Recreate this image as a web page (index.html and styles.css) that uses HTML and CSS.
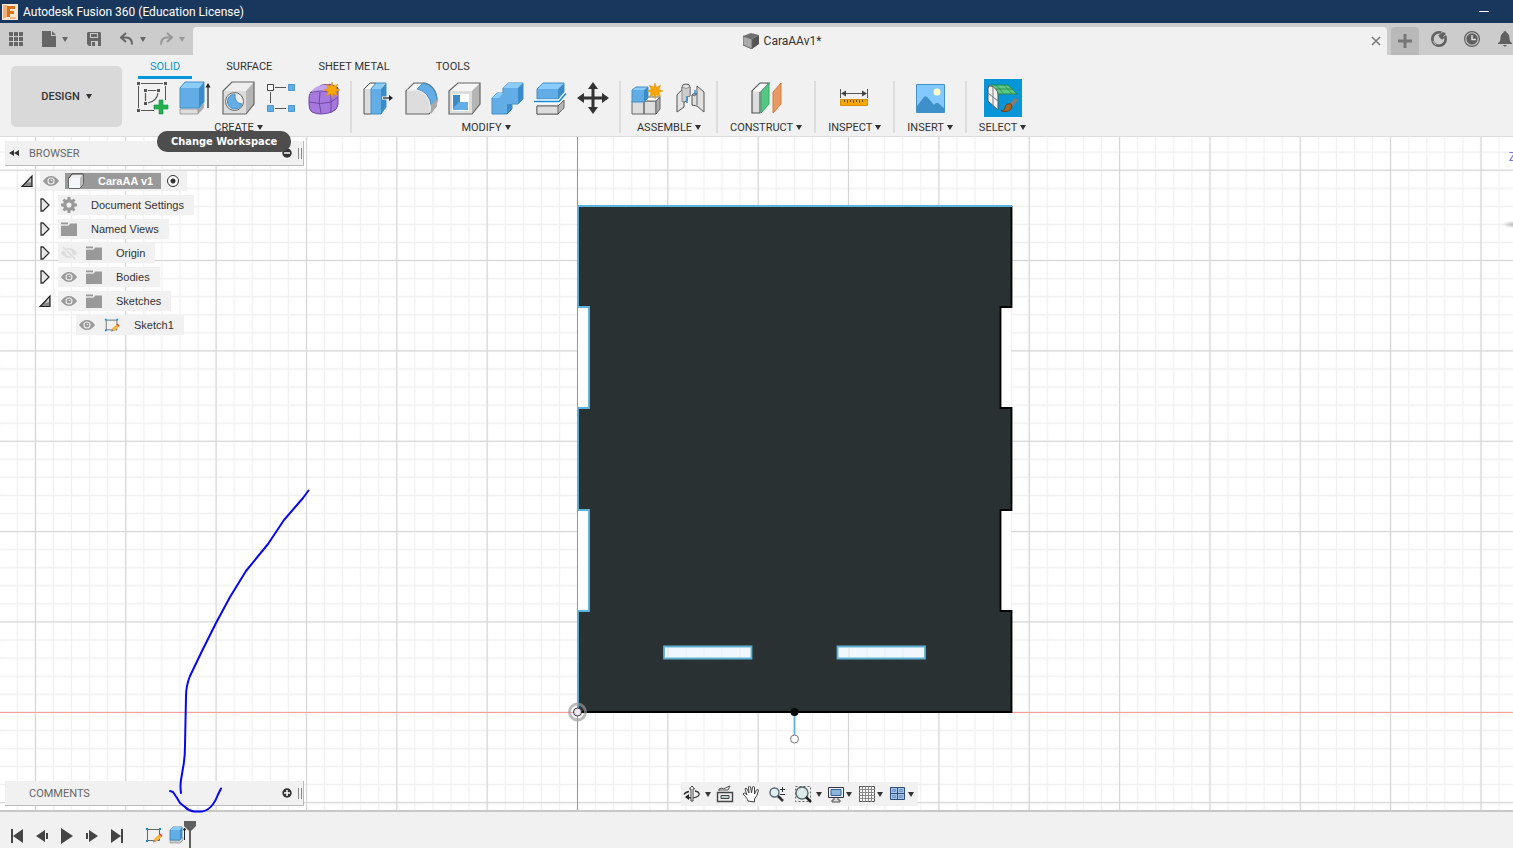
FILE: index.html
```
<!DOCTYPE html>
<html lang="en">
<head>
    <meta charset="UTF-8">
    <meta name="viewport" content="width=device-width, initial-scale=1.0">
    <title>Autodesk Fusion 360 (Education License)</title>
    <link rel="stylesheet" href="styles.css">
</head>
<body>
    <!-- Shared icons -->
    <svg class="sprite" aria-hidden="true">
        <defs>
            <symbol id="eye" viewBox="0 0 16 12">
                <path d="M0 6Q3.500 1 8 1T16 6Q12.500 11 8 11T0 6z" fill="#999"/>
                <circle cx="8" cy="6" r="3.600" fill="#eee"/>
                <circle cx="8" cy="6" r="2.400" fill="#999"/>
                <circle cx="8.500" cy="5.500" r=".8" fill="#eee"/>
            </symbol>
            <symbol id="eye-off" viewBox="0 0 16 12">
                <path d="M0 6Q3.500 1 8 1T16 6Q12.500 11 8 11T0 6z" fill="#ddd"/>
                <circle cx="8" cy="6" r="3.200" fill="#f1f1f1"/>
                <circle cx="8" cy="6" r="2" fill="#ddd"/>
                <path d="M1 0l14 12" stroke="#f1f1f1" stroke-width="3"/>
                <path d="M2 0l12 12" stroke="#ddd" stroke-width="1.500"/>
            </symbol>
            <symbol id="folder" viewBox="0 0 16 14">
                <path d="M0 2.500V.5h7v2zM0 3.500h7.500l1.500-2h7V14H0z" fill="#999"/>
                <path d="M0 3h7.500l1.500-2" stroke="#eee" fill="none" stroke-width=".8"/>
            </symbol>
            <symbol id="closed" viewBox="0 0 12 14">
                <path d="M2 1h2l6 6-6 6H2z" fill="#e8e8e8" stroke="#333" stroke-width="1.300"/>
            </symbol>
            <symbol id="open" viewBox="0 0 12 14">
                <path d="M11 2v10.500H1z" fill="#888" stroke="#222" stroke-width="1.200"/>
                <path d="M10 4v4L6 9z" fill="#ccc"/>
            </symbol>
            <symbol id="sketch" viewBox="0 0 18 16">
                <path d="M2.500 2.500h12v11h-12z" fill="none" stroke="#666"/>
                <path d="M1 1h2v2H1zM14 1h2v2h-2zM1 13h2v2H1z" fill="#0d8ee0"/>
                <path d="M8 15l1.500-3.500 4.500-4 2.500 2.500-5 4.500z" fill="#f7b53c"/>
                <path d="M14 7.500l1.500-1 2 2-1 1.500z" fill="#f0443c"/>
                <path d="M8 15.500l1-3 2 2z" fill="#888"/>
            </symbol>
            <symbol id="star" viewBox="0 0 16 16">
                <path d="M8 0l1.300 4.300L13.600 2.300 11.800 6.500 16 8l-4.200 1.500 1.800 4.200-4.300-2L8 16l-1.300-4.300-4.300 2 1.800-4.200L0 8l4.200-1.500-1.800-4.200 4.300 2z" fill="#f9a500" stroke="#df8e00" stroke-width=".5"/>
            </symbol>
        </defs>
    </svg>

    <header class="title-bar">
        <svg class="app-logo" viewBox="0 0 16 16"><path fill="#fbe6d2" d="M0 0h16v16H0z"/><path fill="#f0b27a" d="M1 1h4v12l-4 2z"/><path fill="#d9731c" d="M5 2h8v3H8v2h4v3H8v3H5z"/><path fill="#f3b98a" d="M8 13h6v2H8z"/></svg>
        <h1>Autodesk Fusion 360 (Education License)</h1>
        <button class="minimize" aria-label="Minimize"></button>
    </header>

    <div class="tab-bar">
        <div class="quick-access">
            <button class="quick" aria-label="Data panel"><svg width="14" height="14"><path fill="#666" d="M0 0h4v4H0zM5 0h4v4H5zM10 0h4v4h-4zM0 5h4v4H0zM5 5h4v4H5zM10 5h4v4h-4zM0 10h4v4H0zM5 10h4v4H5zM10 10h4v4h-4z"/></svg></button>
            <button class="quick wide" aria-label="File"><svg width="14" height="16"><path fill="#666" d="M0 0h9v5h5v11H0z"/><path fill="#666" d="M10 0l4 4h-4z"/></svg><i class="caret"></i></button>
            <button class="quick" aria-label="Save"><svg width="14" height="14"><path fill="#666" d="M1 0h12l1 1v13H2l-2-2V1z"/><path fill="#ccc" d="M3 1h8v5H3zM4 9h7v5H4z"/><path fill="#666" d="M4 2h6v3H4zM5 10h3v4H5z"/></svg></button>
            <button class="quick wide" aria-label="Undo"><svg width="14" height="14"><path d="M6 1L1 5.500 6 10M1 5.500h5q6 0 6 7" fill="none" stroke="#666" stroke-width="2"/></svg><i class="caret"></i></button>
            <button class="quick wide faded" aria-label="Redo"><svg width="14" height="14"><path d="M8 1l5 4.500L8 10M13 5.500H8q-6 0-6 7" fill="none" stroke="#666" stroke-width="2"/></svg><i class="caret"></i></button>
        </div>
        <div class="document-tab">
            <div class="document-name">
                <svg width="16" height="16"><path d="M0 3l8-3 8 2-7 4z" fill="#707070"/><path d="M0 3l9 3v10l-9-4z" fill="#aaa"/><path d="M9 6l7-4v9l-7 5z" fill="#555"/><path d="M0 3l9 3v10l-9-4z" fill="none" stroke="#666"/></svg>
                <span>CaraAAv1*</span>
            </div>
            <button class="close-tab" aria-label="Close"><svg width="10" height="10"><path d="M1 1l8 8M9 1L1 9" stroke="#777" stroke-width="1.500"/></svg></button>
        </div>
        <button class="new-tab" aria-label="New design"><svg width="14" height="14"><path d="M5.500 0h3v5.500H14v3H8.500V14h-3V8.500H0v-3h5.500z" fill="#777"/></svg></button>
        <div class="status-buttons">
            <button class="status" aria-label="Extensions"><svg width="16" height="16"><circle cx="8" cy="8" r="6.700" fill="none" stroke="#606060" stroke-width="2.600"/><path d="M14 2L9 7M8 4l4 4M9 3l4 4" stroke="#606060" stroke-width="2"/><path d="M10 2.500l2-2.500M12.500 5.500L15 3.500M2 10l3 4" stroke="#ccc" stroke-width="1"/></svg></button>
            <button class="status" aria-label="Job status"><svg width="16" height="16"><circle cx="8" cy="8" r="7.400" fill="none" stroke="#606060" stroke-width="1.200"/><circle cx="8" cy="8" r="5.700" fill="#606060"/><path d="M8 4v4.500h4" fill="none" stroke="#ddd" stroke-width="1.500"/></svg></button>
            <button class="status bell" aria-label="Notifications"><svg width="16" height="16"><path d="M6.500 1.500q0-1.500 1.500-1.500t1.500 1.500Q12.500 3 12.500 7q0 4 2.500 5v1H1v-1q2.500-1 2.500-5 0-4 3-5.500zM6 14h4q-2 3-4 0z" fill="#606060"/></svg></button>
        </div>
    </div>

    <div class="toolbar">
        <button class="workspace">DESIGN <i class="caret"></i></button>
        <div class="ribbon">
            <nav class="ribbon-tabs">
                <a class="ribbon-tab active" href="#">SOLID</a>
                <a class="ribbon-tab" href="#">SURFACE</a>
                <a class="ribbon-tab" href="#">SHEET METAL</a>
                <a class="ribbon-tab" href="#">TOOLS</a>
            </nav>
            <div class="ribbon-groups">
                <section class="group">
                    <div class="tools">
                        <button class="tool" aria-label="Create sketch"><svg viewBox="0 0 33 34"><path d="M5 2.500h22M5 29.500h13M2.500 5v22M29.500 5v14" fill="none" stroke="#555"/><path d="M12 9.500h8M9.500 12v8M22 12q-1 8-10 10" fill="none" stroke="#555" stroke-width="1.200"/><path d="M1 1h3v3H1zM28 1h3v3h-3zM1 28h3v3H1zM8 8h3v3H8zM21 8h3v3h-3zM8 21h3v3H8z" fill="#555"/><path d="M23 19h4v5h5v4h-5v5h-4v-5h-5v-4h5z" fill="#23ae50" stroke="#12933d" stroke-width=".6"/></svg></button>
                        <button class="tool" aria-label="Extrude"><svg viewBox="0 0 33 34"><path d="M1 28h18l6-6v5l-6 6H1z" fill="#aaa"/><path d="M1 28h18v5H1z" fill="#ddd" stroke="#777" stroke-width=".6"/><path d="M1 7l5-6h19l-5 6z" fill="#8accfc"/><path d="M1 7h19v20H1z" fill="#62ade6"/><path d="M20 7l5-6v20l-5 6z" fill="#3b8bc9"/><path d="M1 7l5-6h19v20l-5 6H1z" fill="none" stroke="#438fc7"/><path d="M29 27V5" stroke="#222" stroke-width="1.200"/><path d="M26.500 6.500L29 2l2.500 4.500z" fill="#222"/></svg></button>
                        <button class="tool" aria-label="Hole"><svg viewBox="0 0 33 34"><path d="M1 10l9-9h22l-8 9z" fill="#eee"/><path d="M24 10l8-9v22l-8 10z" fill="#b5b5b5"/><path d="M1 10h23v23H1z" fill="#dcdcdc"/><path d="M1 10l9-9h22v22l-8 10H1z" fill="none" stroke="#666" stroke-width="1.200"/><circle cx="12.500" cy="20.500" r="9" fill="#eee" stroke="#666"/><path d="M13 13a7.500 7.500 0 1 0 7 10q-8-1-7-10z" fill="#65ade4" stroke="#438fc7"/></svg></button>
                        <button class="tool" aria-label="Rectangular pattern"><svg viewBox="0 0 33 34"><path d="M10 6.500h11M5.500 11v11M10 27.500h11" stroke="#555"/><path d="M2.500 3.500h6v6h-6z" fill="#fff" stroke="#444"/><path d="M23.500 3.500h6v6h-6zM2.500 24.500h6v6h-6zM23.500 24.500h6v6h-6z" fill="#62ade6" stroke="#4b97d4"/></svg></button>
                        <button class="tool" aria-label="Create form"><svg viewBox="0 0 33 34"><path d="M1 17q0-6 6-9l7-4q10-2 16 3v16q0 5-6 8-12 4-20 0-3-2-3-8z" fill="#a679de" stroke="#6d43a4"/><path d="M2 13q3-8 13-9 8 0 14 3l-5 5q-13-4-22 1z" fill="#c6a5ef"/><path d="M1 21q12 3 22 0l7-5M12 11q-2 11 1 21M23 12v19M2 12q11-4 21 0l7-5" fill="none" stroke="#7048a5" stroke-width="1"/><use href="#star" x="16" y="1" width="16" height="16"/></svg></button>
                    </div>
                    <button class="menu">CREATE<i class="caret"></i></button>
                </section>
                <section class="group">
                    <div class="tools">
                        <button class="tool" aria-label="Press pull"><svg viewBox="0 0 33 34"><path d="M2 8l6-6h6v25l-5 6H2z" fill="#ddd" stroke="#555"/><path d="M3 8l5-5h5l-5 5z" fill="#fff"/><path d="M9 8l5-6h9l-4 6z" fill="#8accfc"/><path d="M9 8h10v25H9z" fill="#62ade6"/><path d="M19 8l5-6v24l-5 7z" fill="#3b8bc9"/><path d="M9 8l5-6h10v24l-5 7H9z" fill="none" stroke="#438fc7"/><path d="M20 17h9" stroke="#fff" stroke-width="3"/><path d="M21 17h7" stroke="#222" stroke-width="1.300"/><path d="M27 14l4 3-4 3z" fill="#222"/></svg></button>
                        <button class="tool" aria-label="Fillet"><svg viewBox="0 0 33 34"><path d="M1 10l8-8h11q11 3 12 17l-1 6-7 8H1z" fill="#ddd" stroke="#666" stroke-width="1.200"/><path d="M2 10l7-7h8l-6 6z" fill="#f8f8f8"/><path d="M12 8l6-6q12 2 14 16l-6 7Q25 11 12 8z" fill="#62ade6" stroke="#438fc7"/><path d="M2 9h10q11 3 13 15v8" fill="none" stroke="#eee"/><path d="M26 24l6-6v7l-6 8z" fill="#aaa"/></svg></button>
                        <button class="tool" aria-label="Shell"><svg viewBox="0 0 33 34"><path d="M1 10l9-8h22l-8 8z" fill="#f5f5f5"/><path d="M24 10l8-8v21l-8 10z" fill="#b5b5b5"/><path d="M1 10h23v23H1z" fill="#ddd"/><path d="M1 10l9-8h22v21l-8 10H1z" fill="none" stroke="#666" stroke-width="1.200"/><path d="M4 13h17v17H4z" fill="#fff"/><path d="M5 14h7v7l-7 7z" fill="#3b8bc9"/><path d="M5 29v-2l6-6h9v8z" fill="#62ade6"/></svg></button>
                        <button class="tool" aria-label="Combine"><svg viewBox="0 0 33 34"><path d="M1 17l5-5h6V7l5-5h15v16l-5 5h-6v5l-5 5H1z" fill="#62ade6" stroke="#438fc7"/><path d="M1 17l5-5h6l-4 5zM12 7l5-5h15l-5 5z" fill="#8accfc"/><path d="M27 7l5-5v16l-5 5zM16 23h5v5l-5 5z" fill="#3b8bc9"/></svg></button>
                        <button class="tool" aria-label="Split body"><svg viewBox="0 0 33 34"><path d="M3 25h21l6-6v8l-6 6H3z" fill="#b5b5b5" stroke="#666"/><path d="M3 25h21v8H3z" fill="#ddd" stroke="#666"/><path d="M3 8l6-6h21l-6 6z" fill="#8accfc"/><path d="M3 8h21v10H3z" fill="#62ade6"/><path d="M24 8l6-6v9l-6 7z" fill="#3b8bc9"/><path d="M3 8l6-6h21v9l-6 7H3z" fill="none" stroke="#438fc7"/><path d="M0 20.500h25l7-8" fill="none" stroke="#fff" stroke-width="4"/><path d="M0 20.500h25l7-8" fill="none" stroke="#0b8ad8" stroke-width="1.500"/></svg></button>
                        <button class="tool" aria-label="Move"><svg viewBox="0 0 33 34"><path d="M16 4v26M3 17h27" stroke="#333" stroke-width="3"/><path d="M16 1l5 7H11zM16 33l5-7H11zM0 17l7-5v10zM32 17l-7-5v10z" fill="#333"/></svg></button>
                    </div>
                    <button class="menu">MODIFY<i class="caret"></i></button>
                </section>
                <section class="group">
                    <div class="tools">
                        <button class="tool" aria-label="New component"><svg viewBox="0 0 33 34"><path d="M1 20h12v13H1zM13 20h12v13H13z" fill="#ddd" stroke="#666"/><path d="M13 20l4-4h12l-4 4z" fill="#fff" stroke="#666"/><path d="M25 20l4-4v12l-4 5z" fill="#aaa" stroke="#666"/><path d="M1 9l4-3h12l-4 3z" fill="#8accfc"/><path d="M1 9h12v12H1z" fill="#62ade6"/><path d="M13 9l4-3v11l-4 4z" fill="#3b8bc9"/><path d="M1 9l4-3h12v11l-4 4H1z" fill="none" stroke="#438fc7"/><use href="#star" x="16" y="2" width="16" height="16"/></svg></button>
                        <button class="tool" aria-label="Joint"><svg viewBox="0 0 33 34"><path d="M3 14q1-2 5-5V6q0-3 4-3t4 3v9l-3 1v4l-3 1v5l-7 5z" fill="#e4e4e4" stroke="#555"/><path d="M8 6q4 3 8 0v9l-3 1v4l-5 1z" fill="#ccc" stroke="#777" stroke-width=".7"/><path d="M30 31l-7-6-5-1V14q2-3 5-1V5l7 6z" fill="#e0e0e0" stroke="#555"/><path d="M23 13v11M18 14q3 2 5-1" fill="none" stroke="#666"/><path d="M13 15v7M21 9v5" stroke="#1b8bd4" stroke-width="1.300"/></svg></button>
                    </div>
                    <button class="menu">ASSEMBLE<i class="caret"></i></button>
                </section>
                <section class="group roomy">
                    <div class="tools">
                        <button class="tool" aria-label="Offset plane"><svg viewBox="0 0 33 34"><path d="M2 10l8-8h9l-9 9v21H2z" fill="#ddd" stroke="#555" stroke-width="1.200"/><path d="M3 10l7-7h8l-8 8z" fill="#fff"/><path d="M11 11l8-9v21l-8 9z" fill="#54c784" stroke="#35a864"/><path d="M23 11l8-9v21l-8 9z" fill="#e79a64" stroke="#d67b3f"/></svg></button>
                    </div>
                    <button class="menu">CONSTRUCT<i class="caret"></i></button>
                </section>
                <section class="group roomy">
                    <div class="tools">
                        <button class="tool" aria-label="Measure"><svg viewBox="0 0 33 34"><path d="M2.500 8v9M29.500 8v9M4 12.500h24" stroke="#555"/><path d="M3 12.500l5-3v6zM29 12.500l-5-3v6z" fill="#444"/><path d="M2.500 18.500h27v6h-27z" fill="#f9a600" stroke="#d98e08"/><path d="M6.500 19v2M9.500 19v3M12.500 19v2M15.500 19v3M18.500 19v2M21.500 19v3M24.500 19v2" stroke="#555"/></svg></button>
                    </div>
                    <button class="menu">INSPECT<i class="caret"></i></button>
                </section>
                <section class="group roomy">
                    <div class="tools">
                        <button class="tool" aria-label="Insert image"><svg viewBox="0 0 33 34"><path d="M2.500 3.500h28v28h-28z" fill="#83c9ff" stroke="#438fc7"/><path d="M3 25q4-5 7-9 2-2 5 2l5 6q2-3 4-2l6 5v4H3z" fill="#3e90ca"/><circle cx="23" cy="11" r="3.500" fill="#ffffc9"/></svg></button>
                    </div>
                    <button class="menu">INSERT<i class="caret"></i></button>
                </section>
                <section class="group roomy">
                    <div class="tools">
                        <button class="tool selected" aria-label="Select"><svg viewBox="0 0 38 38"><path d="M5 6h19l9 9H14z" fill="#5cc883" stroke="#258a4e"/><path d="M12 6l8 9M20 6l8 9M8 10h21" fill="none" stroke="#258a4e" stroke-width=".8"/><path d="M4 9q0-3 3-2 6 2 7 8v16L4 22z" fill="#f3f3f3" stroke="#555"/><path d="M4 14l10 8M9 8v18" fill="none" stroke="#777"/><path d="M33 20l-6 6" stroke="#837b76" stroke-width="4"/><path d="M27 25q-6-1-6 4-1 3-4 3 9 2 11-4z" fill="#a4692a" stroke="#6e4319"/></svg></button>
                    </div>
                    <button class="menu">SELECT<i class="caret"></i></button>
                </section>
            </div>
        </div>
        <div class="tooltip" role="tooltip">Change Workspace</div>
    </div>

    <main class="canvas">
        <svg class="drawing" width="100%" height="100%">
            <defs>
                <pattern id="minor" width="18.070" height="18.070" patternUnits="userSpaceOnUse" x="568.460" y="566.260">
                    <path d="M9.040 0v18.070M0 9.040h18.070" stroke="#f0f0f0" stroke-width="1.200"/>
                </pattern>
                <pattern id="major" width="90.350" height="90.350" patternUnits="userSpaceOnUse" x="532.320" y="530.120">
                    <path d="M45.180 0v90.350M0 45.180h90.350" stroke="#d4d4d4" stroke-width="1.100"/>
                </pattern>
            </defs>
            <rect width="100%" height="100%" fill="url(#minor)"/>
            <rect width="100%" height="100%" fill="url(#major)"/>
            <path d="M0 575.500h4000" stroke="#ff9c9c"/>
            <path d="M577.500 0v2000" stroke="#9290d8"/>
            <!-- Finger-jointed front panel, measured from the origin -->
            <g transform="translate(578 575)">
                <path d="M0-405h11v101H0zM0-202h11v101H0zM423-405h10v101h-10zM423-202h10v101h-10z" fill="#fff"/>
                <path d="M0 0v-101h11v-101H0v-102h11v-101H0v-101h433.500v101h-11v101h11v102h-11v101h11V0z" fill="#293133"/>
                <path d="M433.500-506v101h-11v101h11v102h-11v101h11V0H0" fill="none" stroke="#000" stroke-width="1.800"/>
                <path d="M0 0v-101h11v-101H0v-102h11v-101H0v-101h434" fill="none" stroke="#5eb3dc" stroke-width="1.800"/>
                <path d="M86-65.500h87.500v12H86zM259.500-65.500H347v12h-87.500z" fill="#f0f8fd" stroke="#5eafd2" stroke-width="1.800"/>
                <path d="M90-64v9M271-64v9" stroke="#dde3e7"/>
                <path d="M108-64v9M126-64v9M144-64v9M162-64v9M289-64v9M307-64v9M325-64v9" stroke="#e6eef3"/>
                <path d="M216.500 0v23" stroke="#5eb3dc" stroke-width="1.800"/>
                <circle cx="216.500" cy="0" r="4" fill="#080c0d"/>
                <circle cx="216.500" cy="27" r="4" fill="#fff" stroke="#777"/>
                <circle cx="-.5" cy="0" r="8" fill="none" stroke="#999" stroke-opacity=".65" stroke-width="3"/>
                <circle cx="-.5" cy="0" r="4" fill="#eee8f4" stroke="#333"/>
            </g>
        </svg>
        <span class="axis-label">Z</span>
        <i class="cube-shadow"></i>

        <aside class="side">
            <div class="panel">
                <svg width="10" height="6"><path d="M5 0v6L0 3zM10 0v6L5 3z" fill="#333"/></svg>
                <h2>BROWSER</h2>
                <button class="panel-toggle" aria-label="Collapse"><svg width="10" height="10"><circle cx="5" cy="5" r="4.700" fill="#333"/><path d="M2 5h6" stroke="#fff" stroke-width="1.500"/></svg></button>
                <i class="grip"></i>
            </div>
            <ul class="tree">
                <li class="level-0">
                    <svg class="arrow"><use href="#open"/></svg>
                    <div class="node root">
                        <svg class="mark"><use href="#eye"/></svg>
                        <span class="component">
                            <svg width="16" height="16"><path d="M1 5l3-4h11v10l-3 4H1z" fill="#eee" stroke="#333"/><path d="M1 5h11v10H1z" fill="#f4f6fa"/><path d="M12 5l3-4v10l-3 4z" fill="#bbb"/></svg>
                            <span>CaraAA v1</span>
                        </span>
                        <input class="activate" type="radio" name="active" aria-label="Activate CaraAA v1" checked>
                    </div>
                </li>
                <li class="level-1">
                    <svg class="arrow"><use href="#closed"/></svg>
                    <div class="node">
                        <svg class="mark" viewBox="0 0 16 16"><circle cx="8" cy="8" r="4.300" fill="none" stroke="#999" stroke-width="3.500"/><path d="M8 0v3M8 13v3M0 8h3M13 8h3M2.500 2.500l2 2M11.500 11.500l2 2M2.500 13.500l2-2M11.500 4.500l2-2" stroke="#999" stroke-width="3"/></svg>
                        <span>Document Settings</span>
                    </div>
                </li>
                <li class="level-1">
                    <svg class="arrow"><use href="#closed"/></svg>
                    <div class="node"><svg class="mark"><use href="#folder"/></svg><span>Named Views</span></div>
                </li>
                <li class="level-1">
                    <svg class="arrow"><use href="#closed"/></svg>
                    <div class="node"><svg class="mark"><use href="#eye-off"/></svg><svg class="mark"><use href="#folder"/></svg><span>Origin</span></div>
                </li>
                <li class="level-1">
                    <svg class="arrow"><use href="#closed"/></svg>
                    <div class="node"><svg class="mark"><use href="#eye"/></svg><svg class="mark"><use href="#folder"/></svg><span>Bodies</span></div>
                </li>
                <li class="level-1">
                    <svg class="arrow"><use href="#open"/></svg>
                    <div class="node"><svg class="mark"><use href="#eye"/></svg><svg class="mark"><use href="#folder"/></svg><span>Sketches</span></div>
                </li>
                <li class="level-2">
                    <div class="node"><svg class="mark"><use href="#eye"/></svg><svg class="mark"><use href="#sketch"/></svg><span>Sketch1</span></div>
                </li>
            </ul>
            <div class="panel comments">
                <h2>COMMENTS</h2>
                <button class="panel-toggle" aria-label="Expand"><svg width="10" height="10"><circle cx="5" cy="5" r="4.700" fill="#333"/><path d="M2 5h6M5 2v6" stroke="#fff" stroke-width="1.500"/></svg></button>
                <i class="grip"></i>
            </div>
        </aside>

        <div class="view-bar">
            <button class="view" aria-label="Orbit"><svg width="18" height="18"><path d="M12 6q5 1 4 4-2 3-8 3l-5-1M6 6.500q-4 1-5 3" fill="none" stroke="#333" stroke-width="1.300"/><path d="M6 9l-4 3 4 3z" fill="#222"/><path d="M8 16V4H6.500L9 1l2.500 3H10v12z" fill="#fff" stroke="#444"/></svg><i class="caret"></i></button>
            <button class="view" aria-label="Look at"><svg width="18" height="18"><path d="M1.500 7.500h15v9h-15z" fill="#eee" stroke="#444" stroke-width="1.400"/><path d="M5 10.500h8v3H5z" fill="#bcc" stroke="#444"/><path d="M3 6V4l3-1 1 1 7-3-2 4H3" fill="#eee" stroke="#555"/></svg></button>
            <button class="view" aria-label="Pan"><svg width="18" height="18"><path d="M6 16q0-2-5-7 1-2 3 0l1 1-2-6q1-2 2 0l2 4-.5-6q1-2 2 0l1 6 1-6q1-1 2 0v7l2-4q2-1 2 0-1 6-4 9v3z" fill="#fff" stroke="#444"/></svg></button>
            <button class="view" aria-label="Zoom"><svg width="18" height="18"><circle cx="6.500" cy="7.500" r="4.500" fill="#e2f0f2" stroke="#567" stroke-width="1.400"/><path d="M10 11l5 5" stroke="#333" stroke-width="2.500"/><path d="M12 4.500h5M14.500 2v5M12 9.500h5" stroke="#333"/></svg></button>
            <button class="view" aria-label="Fit"><svg width="18" height="18"><path d="M1.500 1.500h15v15h-15z" fill="none" stroke="#666" stroke-dasharray="2 2"/><circle cx="8" cy="8" r="6" fill="#dcebea" stroke="#566" stroke-width="1.400"/><path d="M12 12l5 5" stroke="#222" stroke-width="2.500"/></svg><i class="caret"></i></button>
            <button class="view tight" aria-label="Display settings"><svg width="18" height="18"><path d="M1.500 2.500h15v10h-15z" fill="#eee" stroke="#334"/><path d="M4 4.500h10v6H4z" fill="#8bb4de" stroke="#35639a"/><path d="M7 13v2H5v2h8v-2h-2v-2" fill="#ddd" stroke="#555"/></svg><i class="caret"></i></button>
            <button class="view tight" aria-label="Grid and snaps"><svg width="18" height="18"><path d="M1.500 1.500h15v15h-15z" fill="#fff" stroke="#555"/><path d="M4.500 1v16M7.500 1v16M10.500 1v16M13.500 1v16M1 4.500h16M1 7.500h16M1 10.500h16M1 13.500h16" stroke="#888"/></svg><i class="caret"></i></button>
            <button class="view tight" aria-label="Viewports"><svg width="18" height="18"><path d="M1.500 2.500h7v6h-7zM8.500 2.500h7v6h-7zM1.500 8.500h7v6h-7zM8.500 8.500h7v6h-7z" fill="#a4c4e8" stroke="#304e7c" stroke-width="1"/><path d="M3.500 4.500h3v2h-3zM10.500 4.500h3v2h-3zM3.500 10.500h3v2h-3zM10.500 10.500h3v2h-3z" fill="#8fb5df" stroke="#5a80b4" stroke-width=".6"/></svg><i class="caret"></i></button>
        </div>
    </main>

    <footer class="timeline">
        <button class="step" aria-label="Go to start"><svg width="14" height="14"><path d="M1 0h2v14H1zM13 0v14L3 7z" fill="#444"/></svg></button>
        <button class="step" aria-label="Step back"><svg width="14" height="14"><path d="M10 1v12L1 7zM11 4h2v6h-2z" fill="#444"/></svg></button>
        <button class="step" aria-label="Play"><svg width="14" height="16"><path d="M1 0l12 8-12 8z" fill="#444"/></svg></button>
        <button class="step" aria-label="Step forward"><svg width="14" height="14"><path d="M4 1v12l9-6zM1 4h2v6H1z" fill="#444"/></svg></button>
        <button class="step" aria-label="Go to end"><svg width="14" height="14"><path d="M11 0h2v14h-2zM1 0v14l10-7z" fill="#444"/></svg></button>
        <div class="features">
            <button class="feature" aria-label="Sketch1"><svg width="18" height="16"><use href="#sketch"/></svg></button>
            <button class="feature" aria-label="Extrude1"><svg width="18" height="18"><path d="M1 14h10l3-3v3l-3 3H1z" fill="#ccc" stroke="#888" stroke-width=".6"/><path d="M1 4l3-3h9v10l-2 3H1z" fill="#62ade6" stroke="#438fc7"/><path d="M1 4l3-3h9l-2 3z" fill="#8accfc"/><path d="M11 4l2-3v10l-2 3z" fill="#3b8bc9"/><path d="M15.500 14V3M14.500 4l1-2 1 2z" stroke="#222"/></svg></button>
        </div>
        <svg class="marker" width="12" height="27"><path d="M0 0h12v5L7 10v17H5V10L0 5z" fill="#606060"/></svg>
    </footer>

    <!-- Pen annotation over the workspace -->
    <svg class="annotation" width="330" height="820" aria-hidden="true">
        <path d="M308.500 490.500L303 498l-19 22-16 24-22 27-16 26-14 26-14 28-12 25q-4 10-4 20l-1 50q0 12-2 22l-2 12q-1 6 0 13M170 791l3 1 4 6 3 5 5 4q4 4 9 4.500h8q6-1 10-6 4-5 6-11l3-6" fill="none" stroke="#0808ef" stroke-width="2" stroke-linecap="round" stroke-linejoin="round"/>
    </svg>
</body>
</html>
```
FILE: styles.css
```
* {
    box-sizing: border-box;
}
body {
    display: flex;
    flex-direction: column;
    min-height: 100vh;
    margin: 0;
    position: relative;
    overflow: hidden;
    background: #f1f1f1;
    color: #333;
    font-family: Roboto, "Liberation Sans", sans-serif;
    font-size: 11px;
}
h1, h2, ul {
    margin: 0;
    padding: 0;
    font-weight: normal;
}
button {
    padding: 0;
    border: 0;
    background: none;
    color: inherit;
    font: inherit;
    cursor: pointer;
}
svg {
    display: block;
    flex: none;
}
.sprite {
    position: absolute;
    width: 0;
    height: 0;
}
.caret {
    flex: none;
    border: 3px solid transparent;
    border-top: 5px solid currentColor;
    border-bottom: 0;
}

/* Title bar */
.title-bar {
    display: flex;
    align-items: center;
    gap: 5px;
    height: 23px;
    padding: 0 24px 0 2px;
    background: #19375d;
    color: #fff;
}
.app-logo {
    width: 16px;
    height: 16px;
}
.title-bar h1 {
    flex: 1;
    font-size: 12px;
}
.minimize {
    width: 10px;
    height: 1px;
    background: #fff;
}

/* Document tabs */
.tab-bar {
    display: flex;
    align-items: flex-end;
    height: 32px;
    background: #ccc;
}
.quick-access {
    display: flex;
    align-items: center;
    gap: 21px;
    width: 193px;
    height: 32px;
    padding-left: 9px;
}
.quick {
    display: flex;
    align-items: center;
    color: #666;
}
.quick.wide {
    gap: 6px;
    margin: 0 -2px;
}
.quick.faded {
    margin-left: -6px;
    opacity: 0.5;
}
.document-tab {
    display: flex;
    flex: 1;
    align-items: center;
    height: 28px;
    padding-right: 6px;
    border-radius: 4px 4px 0 0;
    background: #f1f1f1;
    font-size: 12px;
}
.document-name {
    display: flex;
    flex: 1;
    align-items: center;
    justify-content: center;
    gap: 5px;
}
.new-tab {
    display: grid;
    place-items: center;
    width: 28px;
    height: 28px;
    margin-left: 4px;
    border-radius: 4px 4px 0 0;
    background: #b9b9b9;
}
.status-buttons {
    display: flex;
    align-items: center;
    gap: 9px;
    height: 32px;
    padding-left: 8px;
}
.status {
    display: grid;
    place-items: center;
    width: 24px;
    height: 24px;
}
.bell {
    width: 20px;
    padding-left: 4px;
}

/* Toolbar */
.toolbar {
    display: flex;
    position: relative;
    z-index: 2;
    height: 82px;
    border-bottom: 1px solid #ddd;
}
.workspace {
    display: flex;
    align-items: center;
    justify-content: center;
    gap: 6px;
    width: 111px;
    height: 61px;
    margin: 11px 3px 0 11px;
    border-radius: 5px;
    background: #d9d9d9;
    font-weight: 500;
}
.ribbon-tabs {
    display: flex;
    gap: 22px;
    height: 24px;
    padding-left: 13px;
}
.ribbon-tab {
    padding: 0 12px;
    color: #333;
    line-height: 23px;
    text-decoration: none;
}
.ribbon-tab.active {
    border-bottom: 3px solid #0696d7;
    color: #0696d7;
}
.ribbon-groups {
    display: flex;
}
.group {
    display: flex;
    flex-direction: column;
    align-items: center;
    position: relative;
    padding: 0 10px 0 11px;
}
.group.roomy {
    padding: 0 13px;
}
.group + .group::before {
    content: "";
    position: absolute;
    top: 2px;
    bottom: 4px;
    left: -1px;
    width: 2px;
    background: #ddd;
}
.tools {
    display: flex;
    align-items: center;
    gap: 10px;
    height: 38px;
}
.tool svg {
    width: 33px;
    height: 34px;
}
.tool.selected {
    background: #0696d7;
}
.tool.selected svg {
    width: 38px;
    height: 38px;
}
.menu {
    display: flex;
    align-items: center;
    gap: 3px;
    height: 20px;
}
.tooltip {
    position: absolute;
    top: 76px;
    left: 157px;
    padding: 0 14px;
    border-radius: 10px;
    background: #4d4d4d;
    color: #fff;
    font-family: "DejaVu Sans Condensed", "Noto Sans", sans-serif;
    font-size: 11px;
    font-weight: bold;
    line-height: 21px;
}

/* Modeling canvas */
.canvas {
    display: flex;
    flex: 1;
    position: relative;
    padding: 4px 5px;
    background: #fff;
}
.drawing {
    position: absolute;
    inset: 0;
}
.axis-label {
    position: absolute;
    top: 13px;
    right: -3px;
    color: #7777f5;
    font-size: 12px;
}
.cube-shadow {
    position: absolute;
    top: 84px;
    right: 0;
    width: 10px;
    height: 7px;
    background: radial-gradient(ellipse at right, #bbb, transparent 75%);
}
.side {
    display: flex;
    flex-direction: column;
    position: relative;
    width: 299px;
}
.panel {
    display: flex;
    align-items: center;
    height: 25px;
    padding: 0 1px 0 4px;
    border-right: 1px solid #bbb;
    border-bottom: 1px solid #bbb;
    background: #f1f1f1;
    color: #666;
}
.panel h2 {
    flex: 1;
    padding-left: 10px;
    font-size: 11px;
}
.comments {
    margin-top: auto;
}
.comments h2 {
    padding-left: 20px;
}
.grip {
    width: 4px;
    height: 11px;
    margin-left: 6px;
    border: 1px solid #888;
    border-width: 0 1px;
}

/* Browser tree */
.tree {
    display: flex;
    flex-direction: column;
    gap: 4px;
    margin-top: 5px;
    list-style: none;
    font-family: "Liberation Sans", Arial, sans-serif;
}
.tree li {
    display: flex;
    align-items: center;
    gap: 7px;
    height: 20px;
}
.level-0 {
    padding-left: 16px;
}
.level-1 {
    padding-left: 34px;
}
.level-2 {
    padding-left: 71px;
}
.arrow {
    width: 12px;
    height: 14px;
}
.node {
    display: flex;
    align-items: center;
    gap: 9px;
    height: 20px;
    padding: 0 10px 0 3px;
    background: #f1f1f1;
}
.node > span:last-child {
    padding-left: 5px;
}
.node.root {
    gap: 6px;
    padding-right: 8px;
}
.mark {
    width: 16px;
    height: 16px;
}
.component {
    display: flex;
    align-items: center;
    gap: 14px;
    height: 16px;
    padding: 0 8px 0 3px;
    background: #999;
    color: #fff;
    font-weight: bold;
}
.activate {
    appearance: none;
    width: 12px;
    height: 12px;
    margin: 0;
    border: 1px solid #333;
    border-radius: 50%;
    background: radial-gradient(circle, #333 2px, #fff 3px);
}

/* Navigation bar */
.view-bar {
    display: flex;
    align-items: center;
    gap: 8px;
    position: absolute;
    bottom: 4px;
    left: 45%;
    height: 24px;
    padding: 0 6px 0 2px;
    background: #f1f1f1;
}
.view {
    display: flex;
    align-items: center;
    gap: 4px;
}
.view .caret {
    margin-right: -3px;
}
.view.tight {
    gap: 1px;
    margin-right: 1px;
}

/* Timeline */
.timeline {
    display: flex;
    align-items: center;
    gap: 11px;
    position: relative;
    height: 38px;
    padding: 12px 0 0 10px;
    border-top: 2px solid #c8c8c8;
}
.features {
    display: flex;
    gap: 6px;
    padding: 0 0 2px 10px;
}
.marker {
    position: absolute;
    bottom: 0;
    left: 184px;
}
.annotation {
    position: absolute;
    top: 0;
    left: 0;
    z-index: 3;
    pointer-events: none;
}
```
